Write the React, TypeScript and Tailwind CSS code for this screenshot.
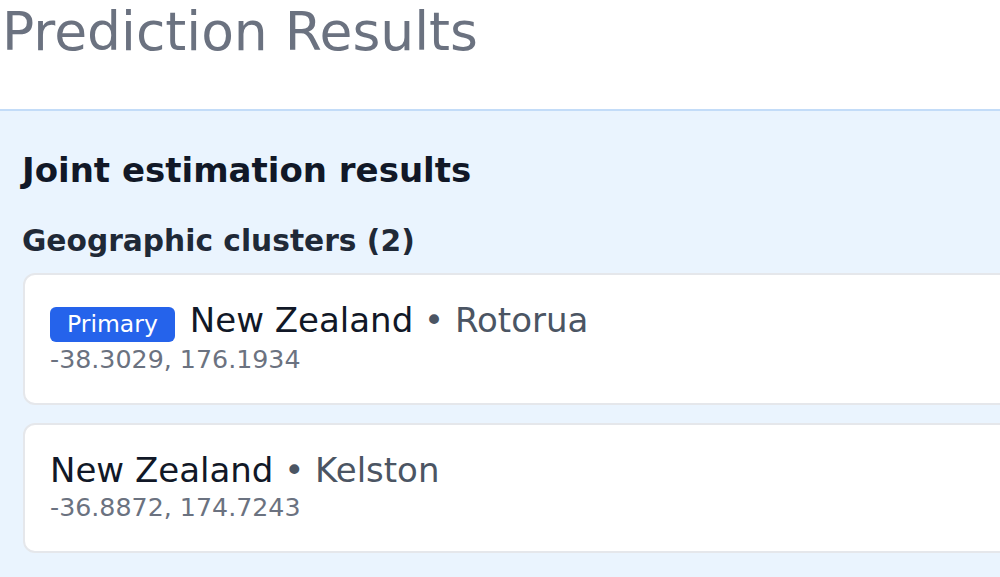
type Cluster = {
  country: string;
  place: string;
  lat: string;
  lng: string;
  primary?: boolean;
};

const clusters: Cluster[] = [
  { country: "New Zealand", place: "Rotorua", lat: "-38.3029", lng: "176.1934", primary: true },
  { country: "New Zealand", place: "Kelston", lat: "-36.8872", lng: "174.7243" },
];

function ClusterCard({ cluster }: { cluster: Cluster }) {
  return (
    <div className="rounded-[12px] border-2 border-[#e5e7eb] bg-white pl-[25px] pt-[25px] pb-[27px]">
      <div className="flex items-baseline gap-[15px]">
        {cluster.primary && (
          <span className="rounded-[6px] bg-[#2563eb] px-[17px] py-[5px] text-[23.5px] leading-[25px] text-white">
            Primary
          </span>
        )}
        <span className="text-[34px] leading-[40px] text-[#111827]">
          {cluster.country}
          <span className="text-[#4b5563]"> • {cluster.place}</span>
        </span>
      </div>
      <div className="mt-[2px] text-[25.3px] leading-[32px] text-[#6b7280]">
        {cluster.lat}, {cluster.lng}
      </div>
    </div>
  );
}

export default function App() {
  return (
    <div className="min-h-screen w-full overflow-hidden bg-white font-['DejaVu_Sans',sans-serif]">
      <div className="w-[1060px]">
        <header className="h-[109px] pl-[2px] pt-[2px]">
          <h1 className="text-[53.5px] leading-[60px] font-normal text-[#6b7280]">Prediction Results</h1>
        </header>
        <section className="min-h-[468px] border-t-2 border-[#c3dcf8] bg-[#eaf4fe] pl-[22px] pt-[39px] pb-[24px]">
          <h2 className="text-[34px] leading-[40px] font-bold text-[#111827]">Joint estimation results</h2>
          <h3 className="mt-[33px] text-[29.7px] leading-[36px] font-bold text-[#1f2937]">
            Geographic clusters ({clusters.length})
          </h3>
          <div className="mt-[14px] ml-[1px] flex flex-col gap-[18px]">
            {clusters.map((c) => (
              <ClusterCard key={c.place} cluster={c} />
            ))}
          </div>
        </section>
      </div>
    </div>
  );
}
